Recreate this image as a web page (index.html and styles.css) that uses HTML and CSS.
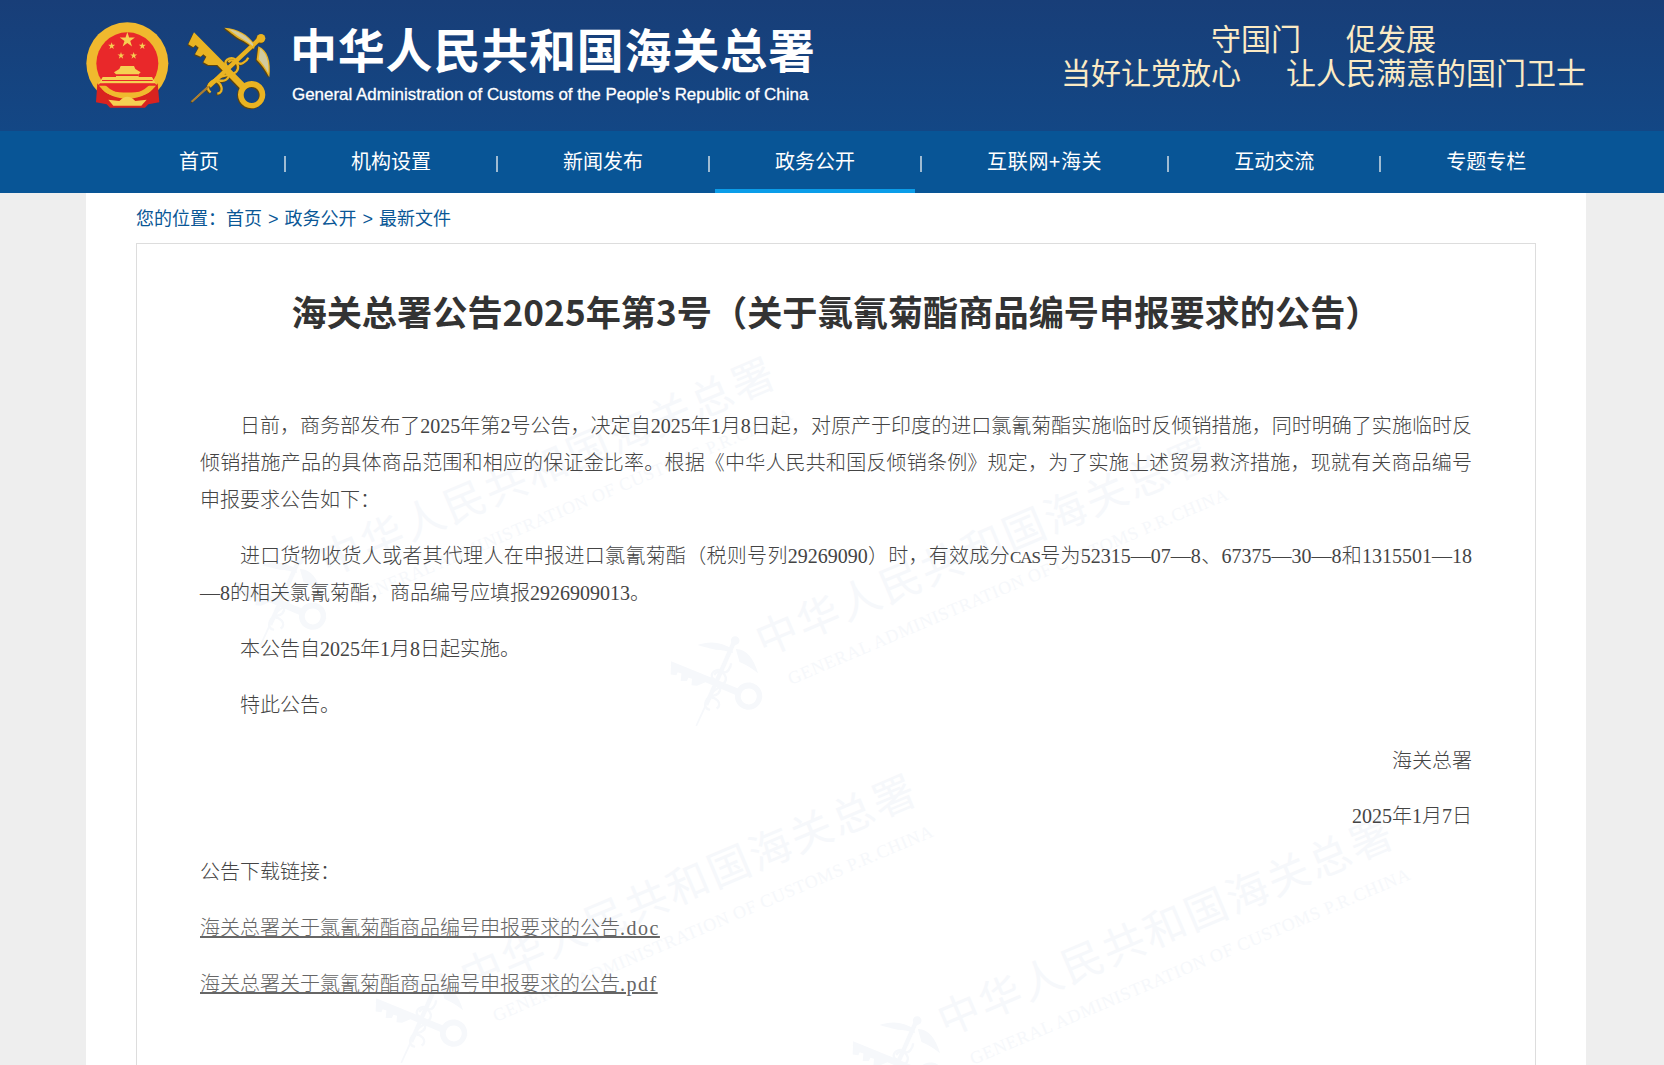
FILE: index.html
```
<!DOCTYPE html>
<html lang="zh-CN">
<head>
    <meta charset="UTF-8">
    <meta name="viewport" content="width=device-width, initial-scale=1.0">
    <title>海关总署公告2025年第3号</title>
    <link rel="stylesheet" href="styles.css">
</head>
<body>
    <header class="header">
        <svg class="logo" viewBox="0 0 600 300" aria-hidden="true">
            <defs>
                <polygon id="star" points="0,-1 .225,-.309 .951,-.309 .363,.118 .588,.809 0,.382 -.588,.809 -.363,.118 -.951,-.309 -.225,-.309"/>
                <g id="keyShape">
                    <path d="M342 52 L325 88 L340 97 L347 90 L356 98 L345 118 L362 125 L370 118 L379 125 L370 142 L385 150 L412 150 L482 222 L495 206 Z"/>
                    <path fill-rule="evenodd" d="M515 198 A41 41 0 1 1 514.9 198 Z M515 216 A24 24 0 1 0 515.1 216 Z"/>
                    <path d="M334 258 L384 212 L388 216 L337 262 Z"/>
                    <path d="M384 208 L535 66 L544 76 L392 218 Z"/>
                    <circle cx="543" cy="70" r="13"/>
                    <path d="M525 90 C505 58 472 40 433 38 C448 50 458 58 478 72 C495 80 510 90 522 102 Z"/>
                    <path d="M535 94 C563 105 574 140 568 187 C556 165 546 150 530 134 Z"/>
                    <path fill="none" stroke="currentColor" stroke-width="7" d="M392 232 C372 218 392 192 416 196 C448 204 458 170 438 150 C428 132 462 120 472 140 C478 155 500 140 505 128"/>
                    <path fill="none" stroke="currentColor" stroke-width="7" d="M412 236 C436 232 424 200 402 196 C420 176 470 186 474 160 C476 140 452 128 446 142"/>
                </g>
            </defs>
            <!-- national emblem -->
            <circle class="gold" cx="142" cy="145" r="123"/>
            <circle class="red" cx="142" cy="145" r="93"/>
            <use class="gold-light" href="#star" transform="translate(142 75) scale(24)"/>
            <use class="gold-light" href="#star" transform="translate(95 93) scale(11)"/>
            <use class="gold-light" href="#star" transform="translate(187 93) scale(11)"/>
            <use class="gold-light" href="#star" transform="translate(123 122) scale(11)"/>
            <use class="gold-light" href="#star" transform="translate(161 122) scale(11)"/>
            <path class="gold-light" d="M102 172 L118 162 L122 153 H162 L166 162 L182 172 L176 178 V186 H216 L228 206 H56 L68 186 H108 V178 Z"/>
            <path class="red" d="M108 178 H176 V183 H108 Z M66 195 H218 V198 H66 Z"/>
            <path class="red" d="M60 205 H225 L232 212 H52 Z"/>
            <path class="red-dark" d="M52 205 C70 235 100 250 142 252 C184 250 214 235 233 205 L238 262 L205 268 L195 278 H90 L80 268 L48 262 Z"/>
            <path class="gold" d="M64 216 C90 238 194 238 220 216 C214 236 180 248 142 248 C104 248 70 236 64 216 Z"/>
            <path class="gold-light" d="M85 254 L118 258 Q142 232 166 258 L200 254 L184 272 H100 Z"/>
            <!-- customs key -->
            <use class="key-edge" href="#keyShape" transform="translate(-3 3)"/>
            <use class="key-gold" href="#keyShape"/>
            <path class="key-wing" d="M520 88 C502 62 472 46 445 42 C460 52 468 60 484 70 C498 78 508 84 518 94 Z"/>
            <path class="key-wing" d="M540 100 C558 112 568 140 565 175 C556 158 548 146 536 132 Z"/>
            <path class="key-needle" d="M334 258 L384 212 L388 216 L337 262 Z"/>
        </svg>
        <div class="site-name">
            <div class="site-cn">中华人民共和国海关总署</div>
            <div class="site-en">General Administration of Customs of the People's Republic of China</div>
        </div>
        <div class="slogan">
            <div>守国门<span class="slogan-gap">促发展</span></div>
            <div>当好让党放心<span class="slogan-gap">让人民满意的国门卫士</span></div>
        </div>
    </header>

    <nav class="nav">
        <a class="nav-item" href="#">首页</a>
        <span class="nav-sep"></span>
        <a class="nav-item" href="#">机构设置</a>
        <span class="nav-sep"></span>
        <a class="nav-item" href="#">新闻发布</a>
        <span class="nav-sep"></span>
        <a class="nav-item active" href="#">政务公开</a>
        <span class="nav-sep"></span>
        <a class="nav-item nav-item-wide" href="#">互联网+海关</a>
        <span class="nav-sep"></span>
        <a class="nav-item" href="#">互动交流</a>
        <span class="nav-sep"></span>
        <a class="nav-item" href="#">专题专栏</a>
    </nav>

    <main class="page">
        <div class="crumbs">
            您的位置：<a href="#">首页</a><span class="crumb-sep">&gt;</span><a href="#">政务公开</a><span class="crumb-sep">&gt;</span><a href="#">最新文件</a>
        </div>
        <article class="article">
            <svg class="watermark" viewBox="0 0 1400 830" aria-hidden="true">
                <defs>
                    <g id="wm">
                        <use href="#keyShape" transform="translate(-73 16) scale(.3333) translate(-450 -150)"/>
                        <text class="wm-cn" x="-22" y="15">中华人民共和国海关总署</text>
                        <text class="wm-en" x="-8" y="52" textLength="476">GENERAL ADMINISTRATION OF CUSTOMS P.R.CHINA</text>
                    </g>
                </defs>
                <use href="#wm" transform="translate(205 310) rotate(-23)"/>
                <use href="#wm" transform="translate(641 390) rotate(-23)"/>
                <use href="#wm" transform="translate(346 727) rotate(-23)"/>
                <use href="#wm" transform="translate(823 770) rotate(-23)"/>
            </svg>
            <h1 class="article-title">海关总署公告2025年第3号（关于氯氰菊酯商品编号申报要求的公告）</h1>
            <div class="article-body">
                <p class="indent">日前，商务部发布了2025年第2号公告，决定自2025年1月8日起，对原产于印度的进口氯氰菊酯实施临时反倾销措施，同时明确了实施临时反倾销措施产品的具体商品范围和相应的保证金比率。根据《中华人民共和国反倾销条例》规定，为了实施上述贸易救济措施，现就有关商品编号申报要求公告如下：</p>
                <p class="indent">进口货物收货人或者其代理人在申报进口氯氰菊酯（税则号列29269090）时，有效成分<span class="cas">CAS</span>号为52315—07—8、67375—30—8和1315501—18—8的相关氯氰菊酯，商品编号应填报2926909013。</p>
                <p class="indent">本公告自2025年1月8日起实施。</p>
                <p class="indent">特此公告。</p>
                <p class="right">海关总署</p>
                <p class="right">2025年1月7日</p>
                <p>公告下载链接：</p>
                <p><a class="file-link" href="#">海关总署关于氯氰菊酯商品编号申报要求的公告<span class="file-ext">.doc</span></a></p>
                <p><a class="file-link" href="#">海关总署关于氯氰菊酯商品编号申报要求的公告<span class="file-ext">.pdf</span></a></p>
            </div>
        </article>
    </main>
</body>
</html>
```
FILE: styles.css
```
html, body {
    height: 100%;
}
body {
    margin: 0;
    height: 1065px;
    overflow: hidden;
    background: #eeeeee;
    font-family: "Noto Sans CJK SC", sans-serif;
    color: #333;
}
a {
    text-decoration: none;
}

/* header */
.header {
    display: flex;
    height: 131px;
    padding: 0 78px 0 80px;
    box-sizing: border-box;
    background: linear-gradient(#183e78, #134785);
}
.logo {
    width: 200px;
    height: 100px;
    margin-top: 15px;
    flex-shrink: 0;
}
.gold { fill: #f0b92e; }
.gold-light { fill: #f6d052; }
.red { fill: #e9282a; }
.red-dark { fill: #d9231f; }
.key-edge { fill: #5c4410; color: #5c4410; }
.key-gold { fill: #e9b322; color: #e9b322; }
.key-wing { fill: #d3cb9e; }
.key-needle { fill: #a87a35; }
.site-name {
    margin-left: 10px;
    padding-top: 18px;
    color: #fff;
}
.site-cn {
    font-size: 47px;
    font-weight: 700;
    line-height: 60px;
    letter-spacing: 0.8px;
    white-space: nowrap;
}
.site-en {
    margin-top: 6px;
    padding-left: 2px;
    font-family: "Liberation Sans", sans-serif;
    font-size: 16.95px;
    line-height: 22px;
    -webkit-text-stroke: 0.3px #fff;
    white-space: nowrap;
}
.slogan {
    margin-left: auto;
    padding-top: 20px;
    font-size: 30px;
    line-height: 34px;
    color: #fbeac4;
    text-align: center;
}
.slogan-gap {
    margin-left: 45px;
}

/* nav */
.nav {
    display: flex;
    height: 62px;
    padding-left: 119px;
    background: #085596;
}
.nav-item {
    padding: 0 60px;
    height: 62px;
    box-sizing: border-box;
    border-bottom: 4px solid transparent;
    font-size: 20px;
    line-height: 60px;
    color: #fff;
    white-space: nowrap;
}
.nav-item-wide {
    letter-spacing: 0.7px;
}
.nav-item.active {
    border-bottom-color: #0b9de9;
}
.nav-sep {
    width: 2px;
    height: 16px;
    margin: 25px 5px 0;
    background: #9fbbd2;
}

/* content */
.page {
    width: 1400px;
    height: 872px;
    margin-left: 86px;
    padding: 0 50px;
    background: #fff;
    overflow: hidden;
}
.crumbs {
    height: 50px;
    font-size: 18px;
    line-height: 49px;
    color: #0a5796;
}
.crumbs a {
    color: #0a5796;
}
.crumb-sep {
    margin: 0 6px;
    font-family: "Liberation Sans", sans-serif;
}
.article {
    position: relative;
    height: 1000px;
    padding: 0 63px;
    border: 1px solid #dddddd;
    box-sizing: border-box;
}
.watermark {
    position: absolute;
    left: 0;
    top: 0;
    width: 1400px;
    height: 830px;
    fill: #f6f8fb;
    color: #f6f8fb;
}
.wm-cn {
    font-family: "Noto Sans CJK SC", sans-serif;
    font-size: 42px;
    letter-spacing: 2.7px;
}
.wm-en {
    font-family: "Liberation Serif", serif;
    font-size: 18px;
}
.article-title {
    position: relative;
    margin: 0;
    padding: 42px 0 72px;
    font-size: 35.2px;
    font-weight: 700;
    line-height: 50px;
    color: #333;
    text-align: center;
    white-space: nowrap;
}
.article-body {
    position: relative;
    font-family: "Liberation Serif", "Noto Sans CJK SC", serif;
    font-size: 20px;
    font-weight: 300;
    line-height: 37px;
    color: #444;
    text-align: justify;
}
.article-body p {
    margin: 0 0 18.9px;
}
.article-body .indent {
    text-indent: 40px;
}
.article-body .right {
    text-align: right;
}
.cas {
    font-size: 17px;
    letter-spacing: -1px;
    line-height: 1;
}
.file-ext {
    letter-spacing: 1.5px;
}
.file-link {
    color: #666;
    text-decoration: underline;
    text-decoration-thickness: 2px;
}
```
